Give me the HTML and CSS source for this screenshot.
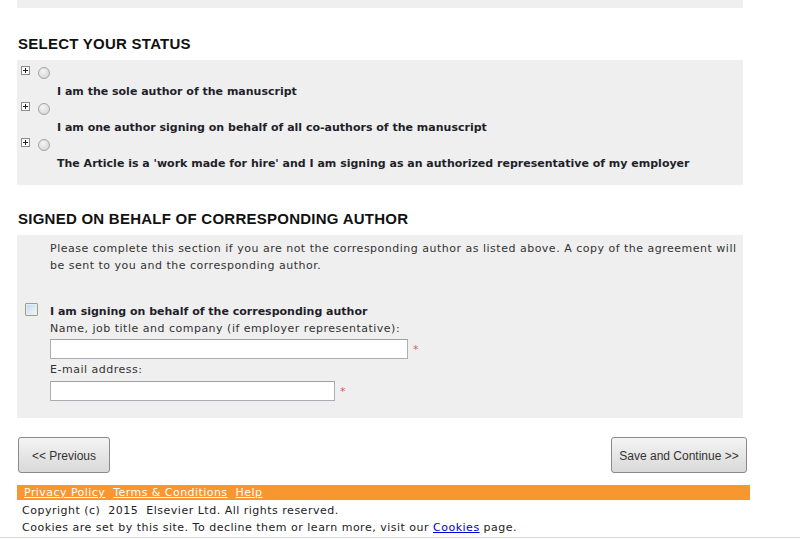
FILE: index.html
```html
<!DOCTYPE html>
<html lang="en">
<head>
<meta charset="utf-8">
<title>Select your status</title>
<link rel="stylesheet" href="styles.css">
</head>
<body>
<div class="page">
  <div class="top-panel"></div>

  <h2 class="sec-title first">SELECT YOUR STATUS</h2>
  <div class="panel status">
    <div class="opt">
      <div class="opt-ctrl"><span class="expander"></span><input type="radio" name="status" class="radio"></div>
      <div class="opt-label">I am the sole author of the manuscript</div>
    </div>
    <div class="opt">
      <div class="opt-ctrl"><span class="expander"></span><input type="radio" name="status" class="radio"></div>
      <div class="opt-label">I am one author signing on behalf of all co-authors of the manuscript</div>
    </div>
    <div class="opt">
      <div class="opt-ctrl"><span class="expander"></span><input type="radio" name="status" class="radio"></div>
      <div class="opt-label">The Article is a 'work made for hire' and I am signing as an authorized representative of my employer</div>
    </div>
  </div>

  <h2 class="sec-title second">SIGNED ON BEHALF OF CORRESPONDING AUTHOR</h2>
  <div class="panel behalf">
    <p class="note">Please complete this section if you are not the corresponding author as listed above. A copy of the agreement will be sent to you and the corresponding author.</p>
    <div class="check-row">
      <input type="checkbox" class="checkbox">
      <div class="fields">
        <div class="check-label">I am signing on behalf of the corresponding author</div>
        <div class="field-label">Name, job title and company (if employer representative):</div>
        <div class="field first-field"><input type="text" class="text-input wide"><span class="req">*</span></div>
        <div class="field-label email">E-mail address:</div>
        <div class="field"><input type="text" class="text-input narrow"><span class="req">*</span></div>
      </div>
    </div>
  </div>

  <div class="nav">
    <button class="btn prev">&lt;&lt; Previous</button>
    <button class="btn next">Save and Continue &gt;&gt;</button>
  </div>

  <div class="footer-bar">
    <a href="#">Privacy Policy</a><a href="#">Terms &amp; Conditions</a><a href="#">Help</a>
  </div>
  <div class="copyright">
    <div>Copyright (c)&nbsp; 2015&nbsp; Elsevier Ltd. All rights reserved.</div>
    <div>Cookies are set by this site. To decline them or learn more, visit our <a href="#">Cookies</a> page.</div>
  </div>
</div>
<div class="bottom-rule"></div>
</body>
</html>
```

FILE: styles.css
```css
html, body {
  margin: 0;
  padding: 0;
  background: #ffffff;
}

body {
  font-family: "DejaVu Sans", Verdana, sans-serif;
  font-size: 11px;
  letter-spacing: 0.5px;
  color: #333333;
  overflow: hidden;
}

.page {
  padding-left: 17px;
}

.top-panel {
  width: 726px;
  height: 8px;
  background: #efefef;
}

.sec-title {
  font-family: "Liberation Sans", Arial, sans-serif;
  font-size: 15px;
  line-height: 17px;
  font-weight: bold;
  letter-spacing: 0.25px;
  color: #111111;
  margin: 0 0 8px 1px;
}

.sec-title.first {
  margin-top: 27px;
}

.sec-title.second {
  margin-top: 25px;
}

.panel {
  width: 726px;
  background: #efefef;
  box-sizing: border-box;
}

.status {
  padding: 4px 0 13px;
}

.opt-ctrl {
  height: 18px;
  display: flex;
  align-items: flex-start;
  padding-left: 4px;
}

.expander {
  width: 9px;
  height: 9px;
  margin-top: 2px;
  box-sizing: border-box;
  border: 1px solid #8c8c8c;
  background:
    linear-gradient(#222, #222) center / 5px 1px no-repeat,
    linear-gradient(#222, #222) center / 1px 5px no-repeat,
    #ffffff;
}

.radio {
  -webkit-appearance: none;
  appearance: none;
  width: 12px;
  height: 12px;
  margin: 3px 0 0 8px;
  box-sizing: border-box;
  border: 1px solid #a4a4a4;
  border-radius: 50%;
  background: radial-gradient(circle at 40% 35%, #f6f6f6 0%, #e0e0e0 55%, #d2d2d2 100%);
}

.opt-label {
  padding-left: 40px;
  padding-top: 1px;
  line-height: 17px;
  font-weight: bold;
  letter-spacing: 0;
  color: #1f1f2a;
}

.behalf {
  padding: 5px 4px 17px 0;
}

.note {
  margin: 0 0 29px 33px;
  line-height: 17px;
  color: #333333;
}

.check-row {
  display: flex;
  align-items: flex-start;
}

.checkbox {
  -webkit-appearance: none;
  appearance: none;
  width: 13px;
  height: 13px;
  margin: 0 12px 0 8px;
  box-sizing: border-box;
  border: 1px solid #9aa47a;
  border-radius: 1px;
  background: linear-gradient(135deg, #c2d8ee 0%, #dfecf8 60%, #f2f8fd 100%);
  box-shadow: inset 0 0 0 1px #e6eef3;
}

.fields {
  display: flex;
  flex-direction: column;
  align-items: flex-start;
}

.check-label {
  line-height: 17px;
  font-weight: bold;
  letter-spacing: 0;
  color: #1f1f2a;
}

.field-label {
  line-height: 17px;
  color: #333333;
}

.field-label.email {
  margin-top: 2px;
}

.field {
  display: flex;
  align-items: center;
  margin-top: 3px;
}

.field.first-field {
  margin-top: 2px;
}

.text-input {
  height: 20px;
  box-sizing: border-box;
  margin: 0;
  padding: 1px 3px;
  border: 1px solid #abadb3;
  border-top-color: #a0a0a0;
  background: #ffffff;
  font: 11px "DejaVu Sans", Verdana, sans-serif;
}

.text-input.wide {
  width: 358px;
}

.text-input.narrow {
  width: 285px;
}

.req {
  margin-left: 5px;
  color: #e2566b;
  font-size: 11px;
  line-height: 11px;
}

.nav {
  width: 730px;
  box-sizing: border-box;
  padding-left: 1px;
  margin-top: 19px;
  display: flex;
  justify-content: space-between;
}

.btn {
  height: 36px;
  box-sizing: border-box;
  margin: 0;
  border: 1px solid #8a8a8a;
  border-radius: 3px;
  background: linear-gradient(#f4f4f4, #e6e6e6 50%, #d9d9d9);
  font-family: "Liberation Sans", Arial, sans-serif;
  font-size: 12px;
  letter-spacing: 0;
  color: #333333;
  padding: 1px 0 0;
}

.btn.prev {
  width: 92px;
}

.btn.next {
  width: 136px;
}

.footer-bar {
  margin-top: 12px;
  width: 733px;
  height: 15px;
  box-sizing: border-box;
  padding-left: 7px;
  background: #f8962f;
  line-height: 15px;
  display: flex;
  gap: 8px;
  letter-spacing: 0.45px;
}

.footer-bar a {
  color: #ffffff;
  text-decoration: underline;
}

.copyright {
  margin-top: 2px;
  padding-left: 5px;
  line-height: 17px;
  color: #222222;
}

.copyright a {
  color: #0000cc;
  text-decoration: underline;
}

.bottom-rule {
  border-top: 1px solid #d6d6d6;
  margin-top: 1px;
  height: 4px;
}
```
